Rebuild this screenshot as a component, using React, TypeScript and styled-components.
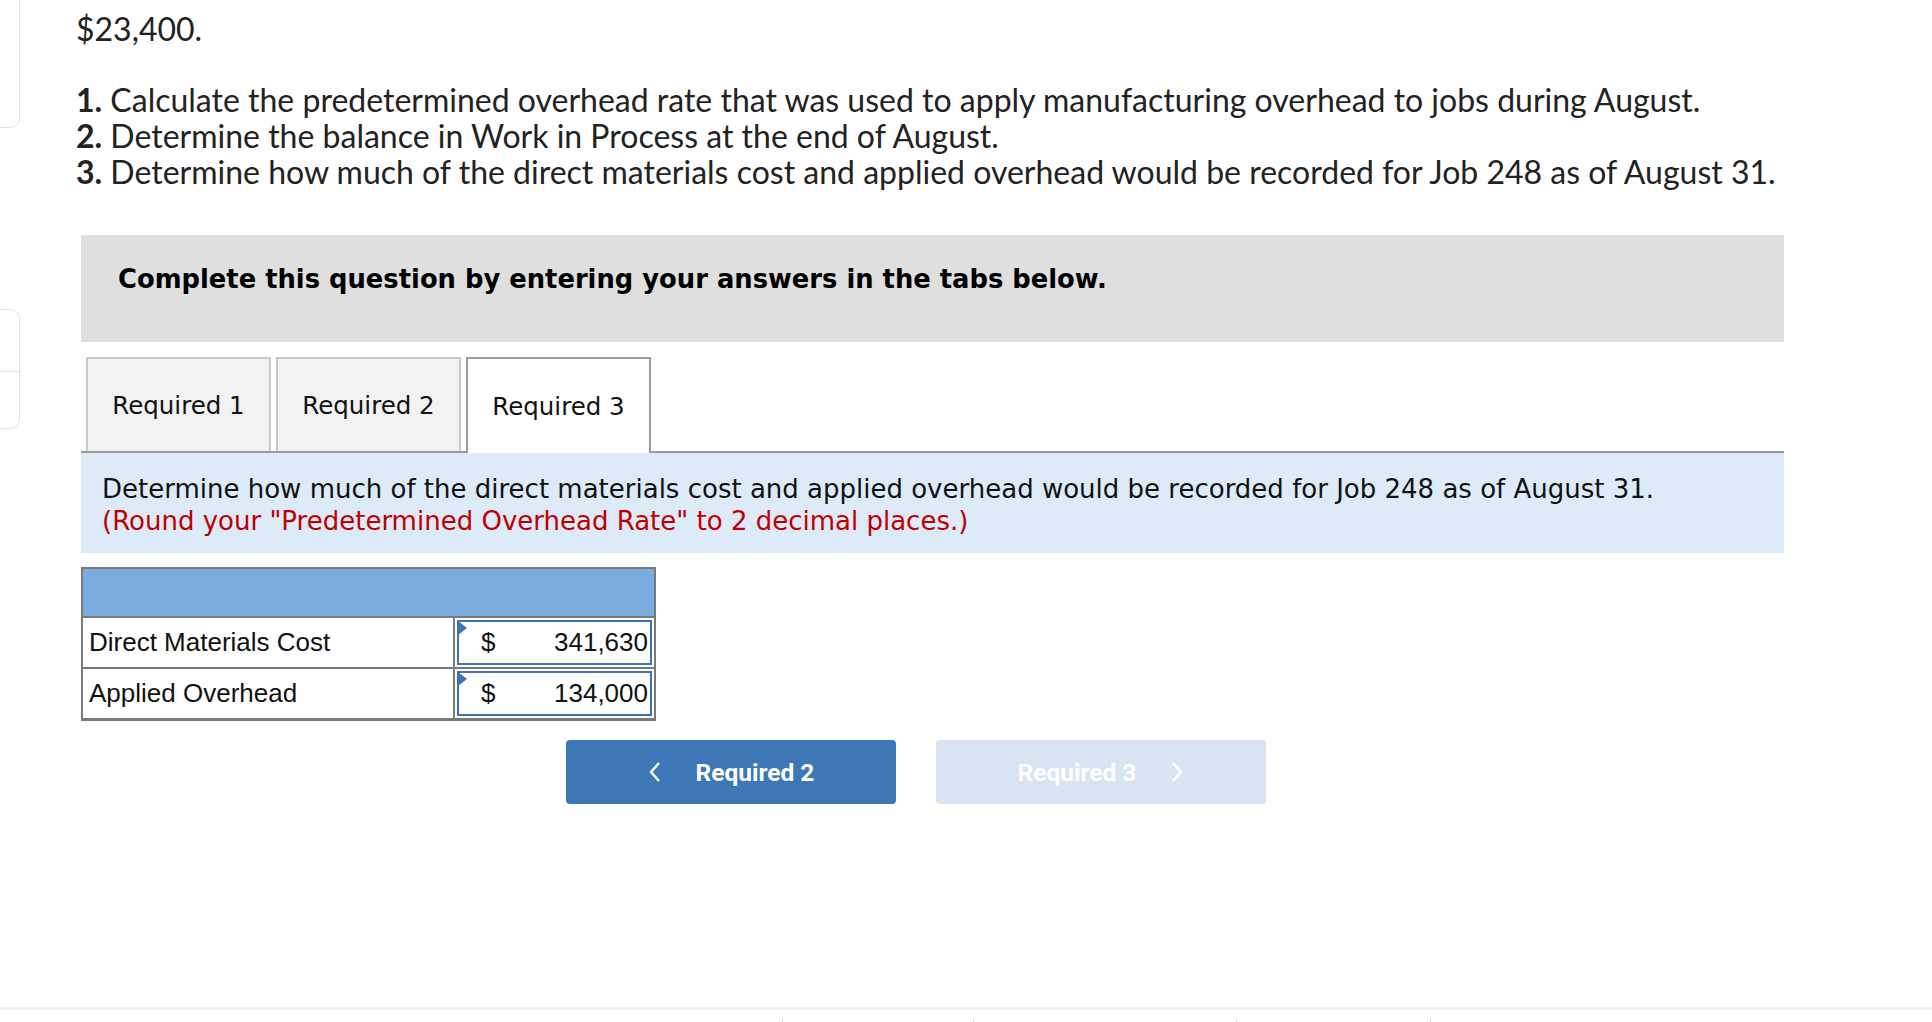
import styled, { createGlobalStyle } from "styled-components";

const Global = createGlobalStyle`
  html, body { margin: 0; padding: 0; background: #fff; }
  body { overflow: hidden; }
`;

type Row = { label: string; value: string };

const rows: Array<Row> = [
    { label: "Direct Materials Cost", value: "341,630" },
    { label: "Applied Overhead", value: "134,000" },
];

const tabs = ["Required 1", "Required 2", "Required 3"];

export default function App() {
    return <Page>
        <Global />
        <Rail>
            <RailCard />
            <RailStack>
                <RailItem />
                <RailItem />
            </RailStack>
        </Rail>
        <Main>
            <Lead>$23,400.</Lead>
            <Questions>
                <li><b>1.</b> Calculate the predetermined overhead rate that was used to apply manufacturing overhead to jobs during August.</li>
                <li><b>2.</b> Determine the balance in Work in Process at the end of August.</li>
                <li><b>3.</b> Determine how much of the direct materials cost and applied overhead would be recorded for Job 248 as of August 31.</li>
            </Questions>
            <Panel>
                <Banner>Complete this question by entering your answers in the tabs below.</Banner>
                <TabBar>
                    {tabs.map((t, i) => <Tab key={t} active={i === 2}>{t}</Tab>)}
                </TabBar>
                <Instruction>
                    Determine how much of the direct materials cost and applied overhead would be recorded for Job 248 as of August 31.
                    <Red>(Round your "Predetermined Overhead Rate" to 2 decimal places.)</Red>
                </Instruction>
                <Table>
                    <HeadRow />
                    {rows.map(r => <TableRow key={r.label}>
                        <LabelCell>{r.label}</LabelCell>
                        <ValueCell>
                            <Marker />
                            <span>$</span>
                            <span>{r.value}</span>
                        </ValueCell>
                    </TableRow>)}
                </Table>
                <Nav>
                    <NavButton>
                        <svg width="14" height="22" viewBox="0 0 14 22" fill="none" stroke="currentColor" strokeWidth="2.4">
                            <path d="M11 2 L3 11 L11 20" />
                        </svg>
                        Required 2
                    </NavButton>
                    <NavButton disabled>
                        Required 3
                        <svg width="14" height="22" viewBox="0 0 14 22" fill="none" stroke="currentColor" strokeWidth="2.4">
                            <path d="M3 2 L11 11 L3 20" />
                        </svg>
                    </NavButton>
                </Nav>
            </Panel>
        </Main>
        <Footer>
            <Tick /><Tick /><Tick /><Tick />
        </Footer>
    </Page>
}

const Page = styled.div`
  position: relative;
  width: 1932px;
  height: 1022px;
  display: flex;
  font-family: "Lato", "Liberation Sans", sans-serif;
  color: #222;
`

const Rail = styled.div`
  width: 18px;
  flex: none;
`

const RailCard = styled.div`
  width: 30px;
  height: 136px;
  margin-top: -10px;
  margin-left: -12px;
  border: 1px solid #e3e3e3;
  border-radius: 10px;
`

const RailStack = styled.div`
  width: 30px;
  margin-top: 181px;
  margin-left: -12px;
  border: 1px solid #e3e3e3;
  border-radius: 10px;
`

const RailItem = styled.div`
  height: 61px;
  & + & { height: 56px; border-top: 1px solid #e3e3e3; }
`

const Main = styled.div`
  padding-left: 58px;
  padding-top: 9px;
`

const Lead = styled.div`
  font-size: 32px;
  line-height: 40px;
`

const Questions = styled.ol`
  list-style: none;
  margin: 33px 0 0;
  padding: 0;
  font-size: 32px;
  line-height: 36px;
  b { font-weight: 700; }
`

const Panel = styled.div`
  margin-left: 5px;
  margin-top: 45px;
  width: 1703px;
`

const Banner = styled.div`
  background: #dfdfdf;
  height: 107px;
  box-sizing: border-box;
  padding: 0 0 20px 37px;
  display: flex;
  align-items: center;
  font-family: "DejaVu Sans", Verdana, sans-serif;
  font-weight: 700;
  font-size: 25.8px;
  color: #000;
`

const TabBar = styled.div`
  display: flex;
  gap: 5px;
  padding: 15px 0 0 5px;
  border-bottom: 2px solid #9a9a9a;
`

const Tab = styled.div<{ active?: boolean }>`
  width: 185px;
  box-sizing: border-box;
  display: flex;
  align-items: center;
  justify-content: center;
  font-family: "DejaVu Sans", Verdana, sans-serif;
  font-size: 24.5px;
  color: #111;
  background: ${p => p.active ? "#fff" : "#f2f2f2"};
  border: 2px solid ${p => p.active ? "#9a9a9a" : "#c8c8c8"};
  border-bottom: none;
  margin-bottom: ${p => p.active ? "-2px" : "0"};
  height: ${p => p.active ? "96px" : "94px"};
`

const Instruction = styled.div`
  background: #dcebf7;
  padding: 20px 21px 16px;
  font-family: "DejaVu Sans", Verdana, sans-serif;
  font-size: 26px;
  line-height: 32px;
  color: #111;
`

const Red = styled.div`
  color: #c00000;
`

const Table = styled.div`
  margin-top: 14px;
  width: 571px;
  border: 2px solid #7a7a7a;
  border-bottom-width: 1px;
`

const HeadRow = styled.div`
  height: 47px;
  background: #7aace0;
  border-bottom: 2px solid #7a7a7a;
`

const TableRow = styled.div`
  display: grid;
  grid-template-columns: 372px 1fr;
  height: 49px;
  border-bottom: 2px solid #7a7a7a;
`

const LabelCell = styled.div`
  display: flex;
  align-items: center;
  padding-left: 6px;
  font-family: "Liberation Sans", Arial, sans-serif;
  font-size: 26px;
  color: #111;
  border-right: 2px solid #7a7a7a;
`

const ValueCell = styled.div`
  position: relative;
  display: flex;
  align-items: center;
  justify-content: space-between;
  margin: 2px;
  padding: 0 2px 0 22px;
  border: 2px solid #3d74b4;
  font-family: "Liberation Sans", Arial, sans-serif;
  font-size: 26px;
  color: #111;
`

const Marker = styled.span`
  position: absolute;
  left: -1px;
  top: -1px;
  width: 0;
  height: 0;
  border-top: 7px solid transparent;
  border-bottom: 7px solid transparent;
  border-left: 9px solid #3d74b4;
`

const Nav = styled.div`
  display: flex;
  gap: 40px;
  margin-top: 19px;
  padding-left: 485px;
`

const NavButton = styled.button`
  width: 330px;
  height: 64px;
  border: none;
  border-radius: 4px;
  display: flex;
  align-items: center;
  justify-content: center;
  gap: 34px;
  font-family: "Roboto", sans-serif;
  font-weight: 700;
  font-size: 24.5px;
  color: #fff;
  background: #3d77b6;
  &:disabled { background: #d8e4f1; }
`

const Footer = styled.div`
  position: absolute;
  left: 0;
  right: 0;
  top: 1007px;
  height: 3px;
  background: #f2f2f2;
`

const Tick = styled.span`
  position: absolute;
  top: 12px;
  width: 1px;
  height: 3px;
  background: #d8d8d8;
  &:nth-child(1) { left: 782px; }
  &:nth-child(2) { left: 973px; }
  &:nth-child(3) { left: 1236px; }
  &:nth-child(4) { left: 1430px; }
`
